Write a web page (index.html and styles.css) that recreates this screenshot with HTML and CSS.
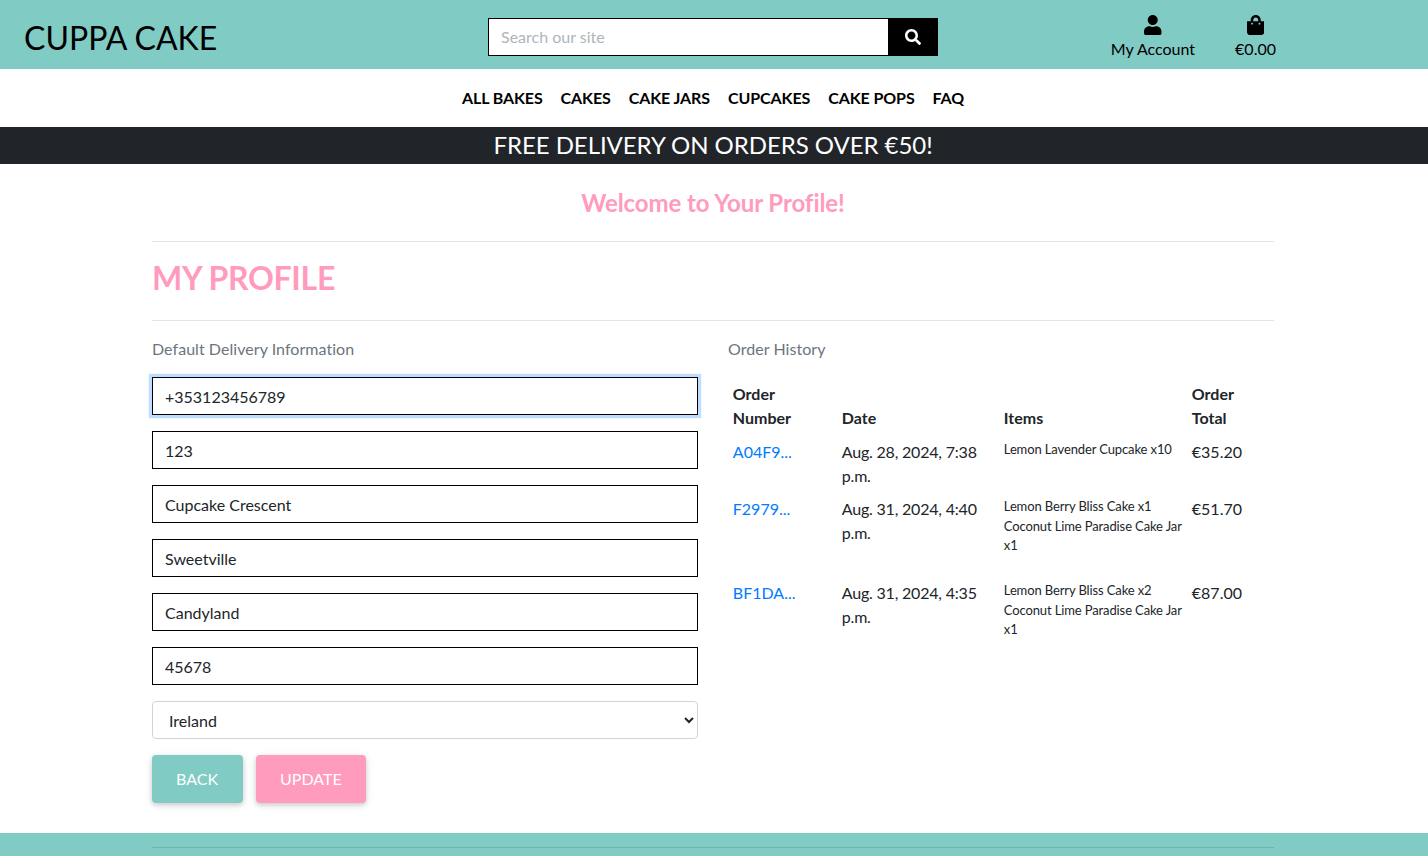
FILE: index.html
```html
<!DOCTYPE html>
<html lang="en">
<head>
<meta charset="utf-8">
<title>Cuppa Cake</title>
<link rel="stylesheet" href="styles.css">
</head>
<body>
<header class="topbar">
  <a class="logo" href="#">CUPPA CAKE</a>
  <form class="search">
    <input class="search-input" type="text" placeholder="Search our site">
    <button class="search-btn" type="button" aria-label="Search">
      <svg class="icon-search" viewBox="0 0 512 512"><path d="M505 442.7L405.3 343c-4.5-4.5-10.6-7-17-7H372c27.6-35.3 44-79.7 44-128C416 93.1 322.9 0 208 0S0 93.1 0 208s93.1 208 208 208c48.3 0 92.7-16.4 128-44v16.3c0 6.4 2.5 12.5 7 17l99.7 99.7c9.4 9.4 24.6 9.4 33.9 0l28.3-28.3c9.4-9.4 9.4-24.6.1-34zM208 336c-70.7 0-128-57.2-128-128 0-70.7 57.2-128 128-128 70.7 0 128 57.2 128 128 0 70.7-57.2 128-128 128z"/></svg>
    </button>
  </form>
  <div class="actions">
    <a class="action" href="#">
      <svg class="icon-top" viewBox="0 0 448 512"><path d="M224 256c70.7 0 128-57.3 128-128S294.7 0 224 0 96 57.3 96 128s57.3 128 128 128zm89.6 32h-16.7c-22.2 10.2-46.9 16-72.9 16s-50.6-5.8-72.9-16h-16.7C60.2 288 0 348.2 0 422.4V464c0 26.5 21.5 48 48 48h352c26.5 0 48-21.5 48-48v-41.6c0-74.2-60.2-134.4-134.4-134.4z"/></svg>
      <span>My Account</span>
    </a>
    <a class="action" href="#">
      <svg class="icon-top" viewBox="0 0 448 512"><path d="M352 160v-32C352 57.42 294.579 0 224 0 153.42 0 96 57.42 96 128v32H0v272c0 44.183 35.817 80 80 80h288c44.183 0 80-35.817 80-80V160h-96zm-192-32c0-35.29 28.71-64 64-64s64 28.71 64 64v32H160v-32zm160 120c-13.255 0-24-10.745-24-24s10.745-24 24-24 24 10.745 24 24-10.745 24-24 24zm-192 0c-13.255 0-24-10.745-24-24s10.745-24 24-24 24 10.745 24 24-10.745 24-24 24z"/></svg>
      <span>€0.00</span>
    </a>
  </div>
</header>
<nav class="mainnav">
  <a href="#">ALL BAKES</a>
  <a href="#">CAKES</a>
  <a href="#">CAKE JARS</a>
  <a href="#">CUPCAKES</a>
  <a href="#">CAKE POPS</a>
  <a href="#">FAQ</a>
</nav>
<div class="banner">FREE DELIVERY ON ORDERS OVER €50!</div>
<main class="content">
  <h1 class="welcome">Welcome to Your Profile!</h1>
  <hr class="rule">
  <h2 class="page-title">MY PROFILE</h2>
  <hr class="rule">
  <div class="columns">
    <section>
      <p class="section-label">Default Delivery Information</p>
      <form class="profile-form">
        <input class="field field-focus" type="text" value="+353123456789">
        <input class="field" type="text" value="123">
        <input class="field" type="text" value="Cupcake Crescent">
        <input class="field" type="text" value="Sweetville">
        <input class="field" type="text" value="Candyland">
        <input class="field" type="text" value="45678">
        <select class="country"><option>Ireland</option></select>
        <div class="buttons">
          <a class="btn btn-back" href="#">BACK</a>
          <a class="btn btn-update" href="#">UPDATE</a>
        </div>
      </form>
    </section>
    <section>
      <p class="section-label">Order History</p>
      <table class="orders">
        <thead>
          <tr>
            <th class="col-num">Order Number</th>
            <th class="col-date">Date</th>
            <th class="col-items">Items</th>
            <th class="col-total">Order Total</th>
          </tr>
        </thead>
        <tbody>
          <tr>
            <td><a href="#">A04F9...</a></td>
            <td class="date">Aug. 28, 2024, 7:38 p.m.</td>
            <td class="items"><ul><li>Lemon Lavender Cupcake x10</li></ul></td>
            <td>€35.20</td>
          </tr>
          <tr>
            <td><a href="#">F2979...</a></td>
            <td class="date">Aug. 31, 2024, 4:40 p.m.</td>
            <td class="items"><ul class="spaced"><li>Lemon Berry Bliss Cake x1</li><li>Coconut Lime Paradise Cake Jar x1</li></ul></td>
            <td>€51.70</td>
          </tr>
          <tr>
            <td><a href="#">BF1DA...</a></td>
            <td class="date">Aug. 31, 2024, 4:35 p.m.</td>
            <td class="items"><ul class="spaced"><li>Lemon Berry Bliss Cake x2</li><li>Coconut Lime Paradise Cake Jar x1</li></ul></td>
            <td>€87.00</td>
          </tr>
        </tbody>
      </table>
    </section>
  </div>
</main>
<footer class="footer"><hr class="footer-rule"></footer>
</body>
</html>
```
FILE: styles.css
```css
* { box-sizing: border-box; }
html, body { height: 856px; overflow: hidden; }
body {
  margin: 0;
  font-family: Lato, "Liberation Sans", sans-serif;
  font-size: 16px;
  line-height: 1.5;
  color: #212529;
  background: #fff;
}
a { text-decoration: none; color: inherit; }

.topbar {
  height: 69px;
  background: #80cbc4;
  display: grid;
  grid-template-columns: 464px 450px 1fr;
  align-items: center;
  padding: 4px 0 0 24px;
}
.logo {
  font-size: 32px;
  line-height: 38px;
  color: #000;
  margin-top: 2px;
}
.search { display: flex; height: 38px; }
.search-input {
  flex: 1;
  min-width: 0;
  border: 1px solid #000;
  border-right: 0;
  padding: 1px 12px 0;
  font: inherit;
  outline: none;
  background: #fff;
}
.search-input::placeholder { color: #adb5bd; }
.search-btn {
  width: 50px;
  border: 0;
  padding: 0;
  background: #000;
  display: flex;
  align-items: center;
  justify-content: center;
}
.icon-search { width: 16px; height: 16px; fill: #fff; }
.actions {
  display: flex;
  justify-content: flex-end;
  gap: 40px;
  padding-right: 152px;
  margin-top: 2px;
}
.action { display: flex; flex-direction: column; align-items: center; color: #000; }
.icon-top { width: 17.5px; height: 20px; fill: #000; }
.action span { line-height: 24px; margin-top: 2px; }

.mainnav {
  height: 58px;
  display: flex;
  justify-content: center;
  align-items: center;
  gap: 18px;
  padding-right: 2px;
  font-weight: 700;
  color: #000;
  letter-spacing: -0.1px;
}
.banner {
  height: 37px;
  padding-right: 2px;
  background: #212529;
  color: #fff;
  text-align: center;
  font-size: 24px;
  line-height: 35px;
  letter-spacing: -0.05px;
}

.content { padding: 0 154px 0 152px; height: 669px; }
.welcome {
  margin: 0;
  padding-top: 24px;
  height: 77px;
  text-align: center;
  font-size: 24px;
  line-height: 30px;
  font-weight: 700;
  color: #ff9bbd;
  letter-spacing: -0.08px;
}
.rule { margin: 0; border: 0; border-top: 1px solid rgba(0,0,0,.1); }
.page-title {
  margin: 0;
  height: 78px;
  padding-top: 15px;
  font-size: 32px;
  line-height: 41px;
  font-weight: 700;
  color: #ff9bbd;
  letter-spacing: -0.3px;
}
.columns { display: grid; grid-template-columns: 546px 546px; column-gap: 30px; padding-top: 16px; }
.section-label { margin: 0 0 16px; color: #6c757d; letter-spacing: 0.05px; }
.profile-form { display: flex; flex-direction: column; gap: 16px; }
.field {
  height: 38px;
  border: 1px solid #000;
  padding: 0 12px;
  font: inherit;
  color: #212529;
  background: #fff;
  outline: none;
}
.field-focus { box-shadow: 0 0 0 3.2px #bfdeff; }
.country {
  height: 38px;
  border: 1px solid #ced4da;
  border-radius: 4px;
  padding: 0 13px 0 12px;
  font: inherit;
  color: #212529;
  background: #fff;
  outline: none;
}
.buttons { display: flex; gap: 13px; }
.btn {
  height: 48px;
  padding: 0 24px;
  line-height: 48px;
  color: #fff;
  border-radius: 4px;
  box-shadow: 0 2px 5px rgba(0,0,0,.16), 0 2px 10px rgba(0,0,0,.08);
}
.btn-back { background: #80cbc4; padding-right: 25px; }
.btn-update { background: #ff9bbd; }

.orders { border-collapse: collapse; table-layout: fixed; width: 520px; }
.orders th, .orders td { padding: 4.8px; vertical-align: top; text-align: left; }
.orders thead th { vertical-align: bottom; font-weight: 700; padding-bottom: 5.1px; }
.col-num { width: 109px; }
.col-date { width: 162px; }
.col-items { width: 188px; }
.orders a { color: #007bff; }
.orders .date { letter-spacing: -0.2px; }
.items ul { list-style: none; margin: 0; padding: 0; font-size: 13px; line-height: 19.5px; letter-spacing: -0.12px; }
.items ul.spaced { margin-bottom: 16px; }

.footer { height: 23px; background: #80cbc4; padding: 14px 154px 0 152px; }
.footer-rule { margin: 0; border: 0; border-top: 1px solid rgba(0,0,0,.12); }
```
